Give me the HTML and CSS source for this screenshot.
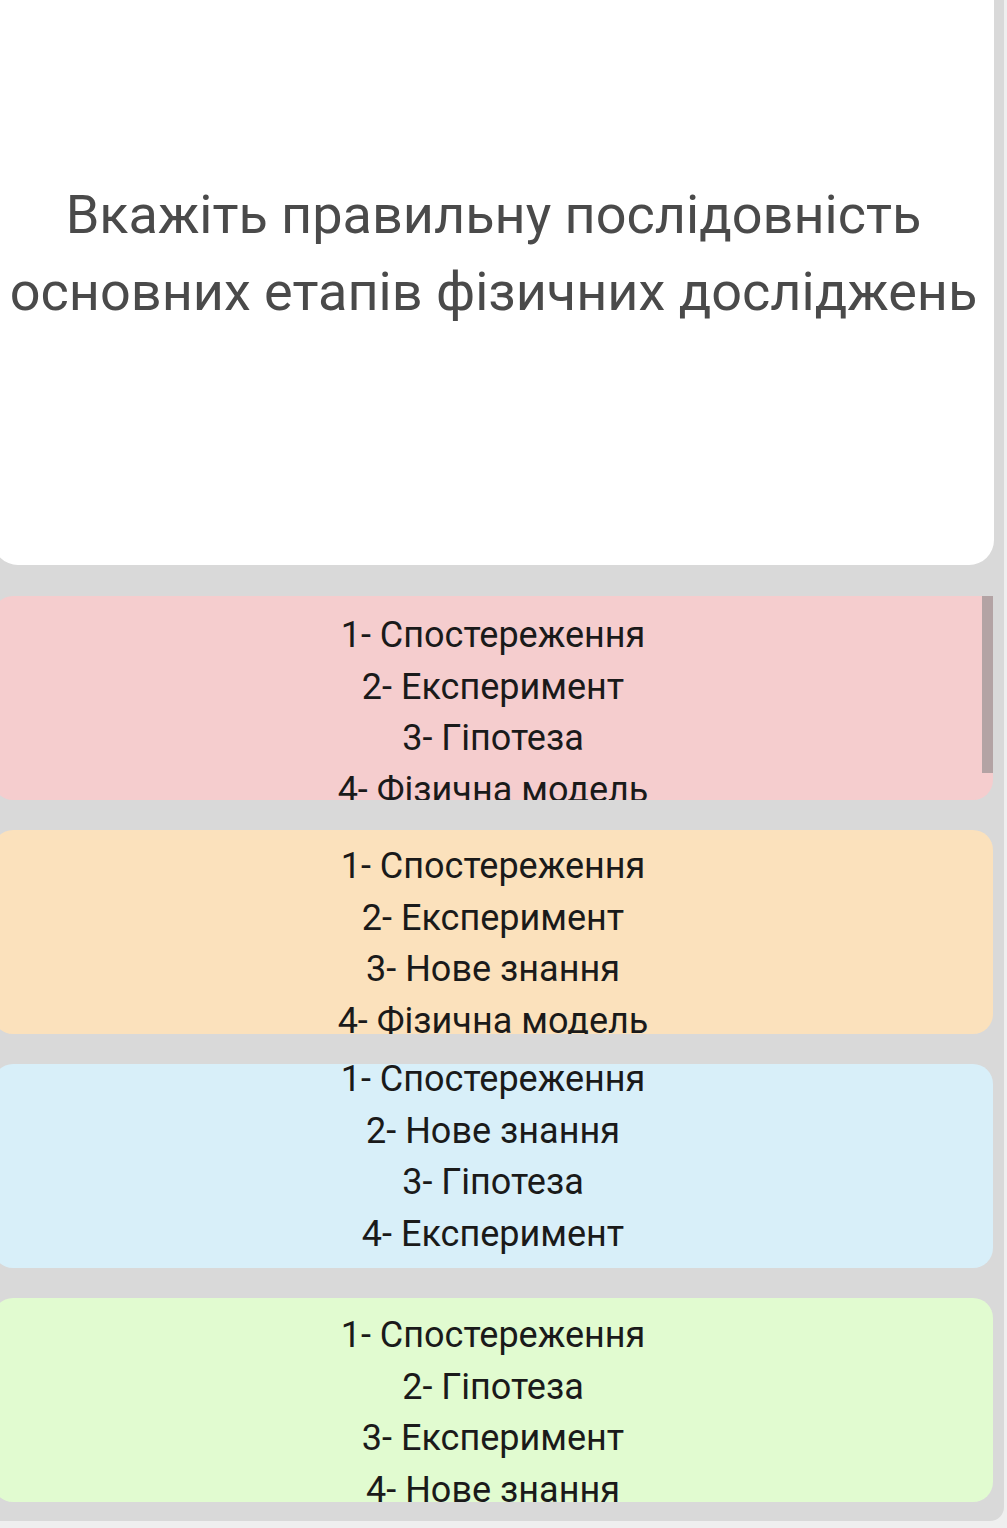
FILE: index.html
```html
<!doctype html>
<html>
<head>
<meta charset="utf-8">
<title>Тест</title>
<link rel="stylesheet" href="styles.css">
</head>
<body>
<div class="screen">
    <div class="list">
        <div class="question">
            <p>Вкажіть правильну послідовність<br>основних етапів фізичних досліджень</p>
        </div>
        <div class="answer pink">
            <div class="inner">
                <p>1- Спостереження</p>
                <p>2- Експеримент</p>
                <p>3- Гіпотеза</p>
                <p>4- Фізична модель</p>
            </div>
            <span class="scroll"></span>
        </div>
        <div class="answer orange">
            <div class="inner">
                <p>1- Спостереження</p>
                <p>2- Експеримент</p>
                <p>3- Нове знання</p>
                <p>4- Фізична модель</p>
            </div>
        </div>
        <div class="answer blue">
            <div class="inner">
                <p>1- Спостереження</p>
                <p>2- Нове знання</p>
                <p>3- Гіпотеза</p>
                <p>4- Експеримент</p>
            </div>
        </div>
        <div class="answer green">
            <div class="inner">
                <p>1- Спостереження</p>
                <p>2- Гіпотеза</p>
                <p>3- Експеримент</p>
                <p>4- Нове знання</p>
            </div>
        </div>
    </div>
</div>
</body>
</html>
```
FILE: styles.css
```css
* { padding: 0; margin: 0; box-sizing: border-box; }
html, body { height: 100%; }
body { background: #efefef; font-family: Roboto, "Noto Sans", sans-serif; overflow: hidden; }

.screen { width: 1004px; height: 1521px; background: #d9d9d9; border-bottom-right-radius: 14px; overflow: hidden; }
.list { margin-left: -7px; width: 1001px; display: flex; flex-direction: column; gap: 30px; }

.question { height: 565px; background: #fff; border-radius: 0 0 25px 25px; padding-top: 176px; text-align: center; color: #4a4a4a; font-size: 54px; line-height: 77px; margin-bottom: 1px; }

.answer { position: relative; width: 1000px; height: 204px; border-radius: 20px; overflow: hidden; text-align: center; color: #1a1a1a; font-size: 36px; line-height: 51.5px; }
.answer .inner { padding-top: 14px; }
.pink { background: #f5cdce; border-top-right-radius: 0; }
.orange { background: #fbe1bc; }
.orange .inner { padding-top: 11px; }
.blue { background: #d8eff9; }
.blue .inner { padding-top: 0; margin-top: -10px; }
.green { background: #e1fbd0; }
.green .inner { padding-top: 12px; }

.scroll { position: absolute; top: 0; right: 0; width: 11px; height: 177px; background: #b3a3a4; }
```
